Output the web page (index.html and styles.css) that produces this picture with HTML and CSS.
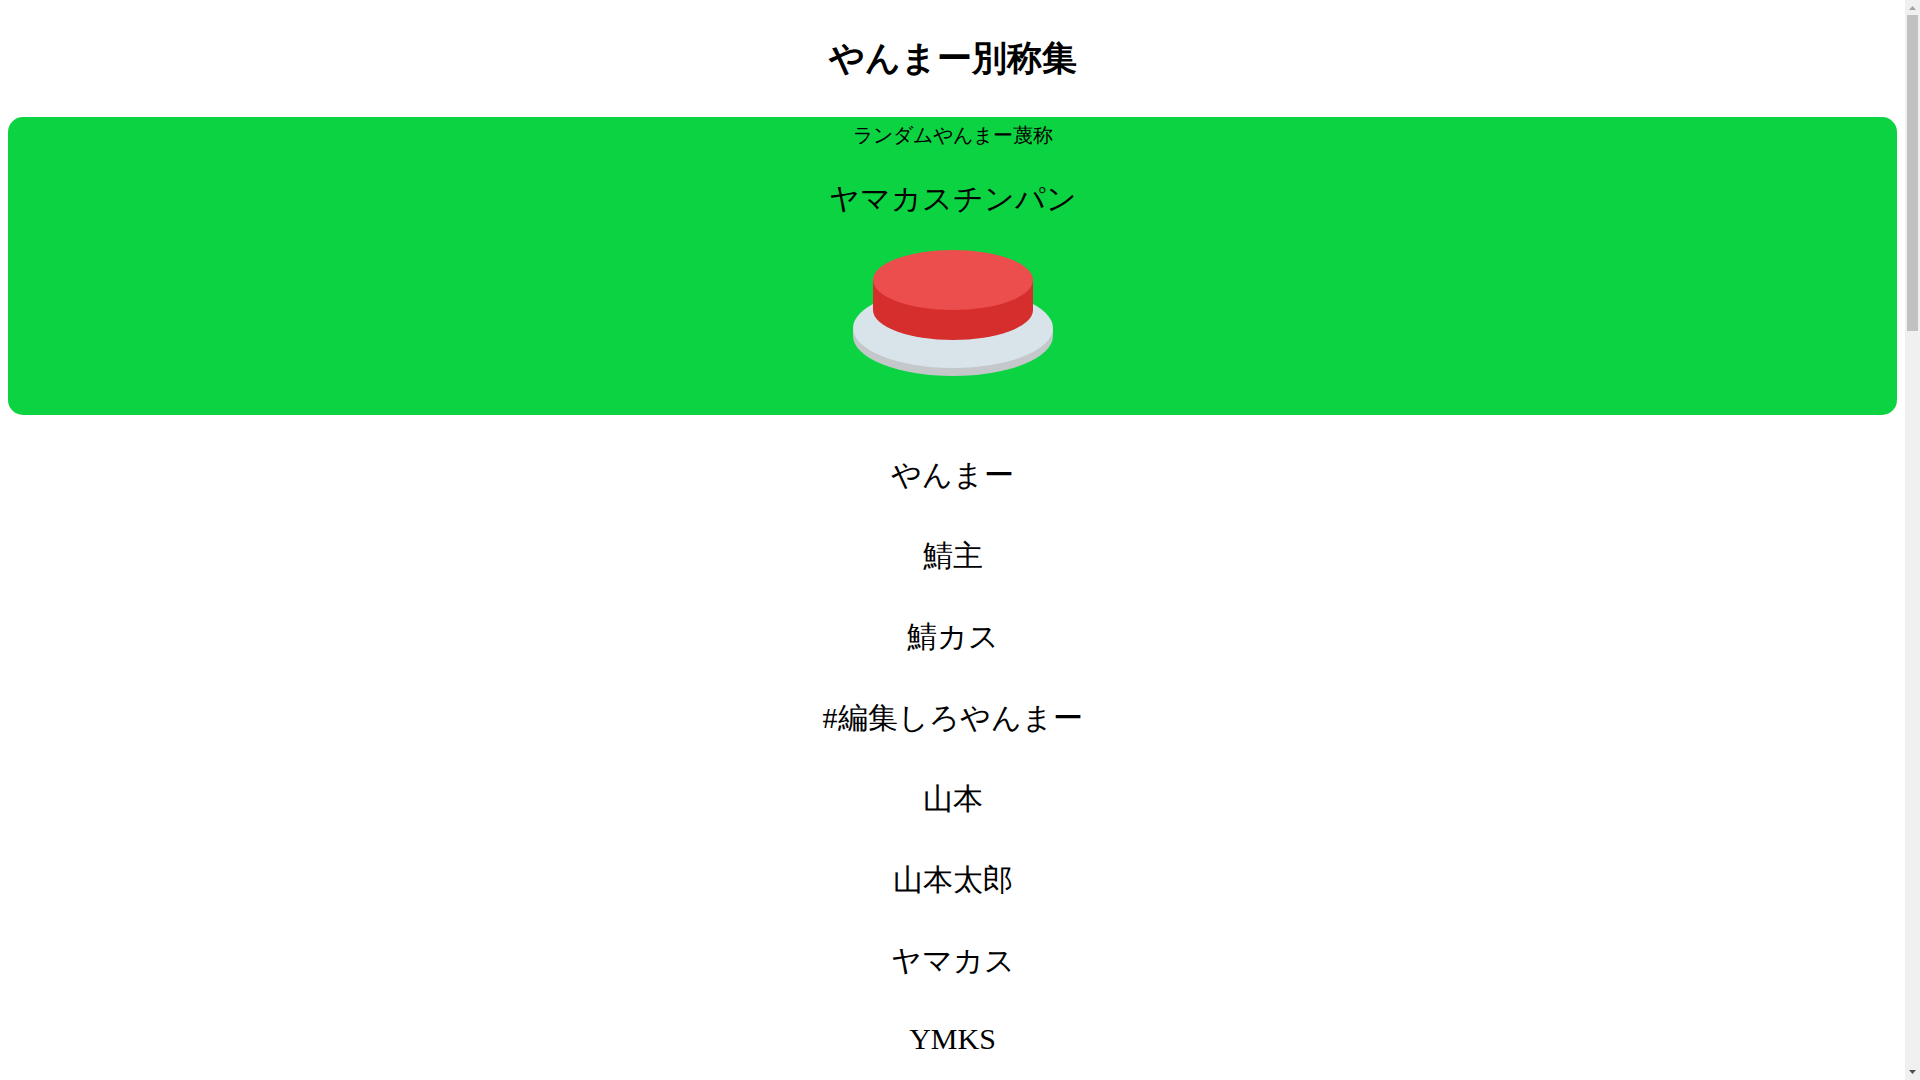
FILE: index.html
```html
<!DOCTYPE html>
<html lang="ja">
<head>
    <meta charset="UTF-8">
    <meta name="viewport" content="width=device-width, initial-scale=1.0">
    <title>やんまー別称集</title>
    <link rel="stylesheet" href="styles.css">
</head>
<body>
    <main class="page">
        <h1 class="title">やんまー別称集</h1>
        <section class="random">
            <div class="random-label">ランダムやんまー蔑称</div>
            <p class="result">ヤマカスチンパン</p>
            <button class="push" type="button" aria-label="ランダム">
                <svg width="200" height="126" viewBox="0 0 200 126">
                    <path d="M0 78 V86 A100 40 0 0 0 200 86 V78 Z" fill="#c4c8ca"/>
                    <ellipse cx="100" cy="78" rx="100" ry="40" fill="#d9e4ea"/>
                    <path d="M20 30 V60 A80 30 0 0 0 180 60 V30 Z" fill="#d62d2d"/>
                    <ellipse cx="100" cy="30" rx="80" ry="30" fill="#ec4d4d"/>
                </svg>
            </button>
        </section>
        <div class="list">
            <p class="name">やんまー</p>
            <p class="name">鯖主</p>
            <p class="name">鯖カス</p>
            <p class="name">#編集しろやんまー</p>
            <p class="name">山本</p>
            <p class="name">山本太郎</p>
            <p class="name">ヤマカス</p>
            <p class="name">YMKS</p>
        </div>
    </main>
    <div class="scrollbar">
        <svg class="arrow" width="15" height="15" viewBox="0 0 15 15"><path d="M4 10 L7.500 6 L11 10 Z" fill="#a3a3a3"/></svg>
        <div class="thumb"></div>
        <svg class="arrow" width="15" height="15" viewBox="0 0 15 15"><path d="M4 5 L7.500 9 L11 5 Z" fill="#505050"/></svg>
    </div>
</body>
</html>
```
FILE: styles.css
```css
body {
    margin: 0;
    display: flex;
    height: 100vh;
    overflow: hidden;
    background-color: #fff;
    color: #000;
    font-family: "Liberation Serif", serif;
}
.page {
    flex: 1;
    padding: 0 8px;
    overflow: hidden;
    text-align: center;
}
.title {
    margin: 35px 0;
    font-size: 35px;
}
.random {
    padding-bottom: 39px;
    border-radius: 15px;
    background-color: #0cd342;
}
.random-label {
    padding-top: 5px;
    font-size: 20px;
}
.result {
    margin: 30px 0;
    font-size: 30px;
}
.name {
    margin: 40px 0;
    font-size: 30px;
}
.push {
    display: block;
    margin: 0 auto;
    padding: 0;
    border: none;
    background: none;
    cursor: pointer;
}
.push svg {
    display: block;
}
.scrollbar {
    display: flex;
    flex-direction: column;
    width: 15px;
    background-color: #f0f0f0;
}
.thumb {
    height: 316px;
    margin: 0 2px auto;
    background-color: #c1c1c1;
}
.arrow {
    display: block;
}
```
